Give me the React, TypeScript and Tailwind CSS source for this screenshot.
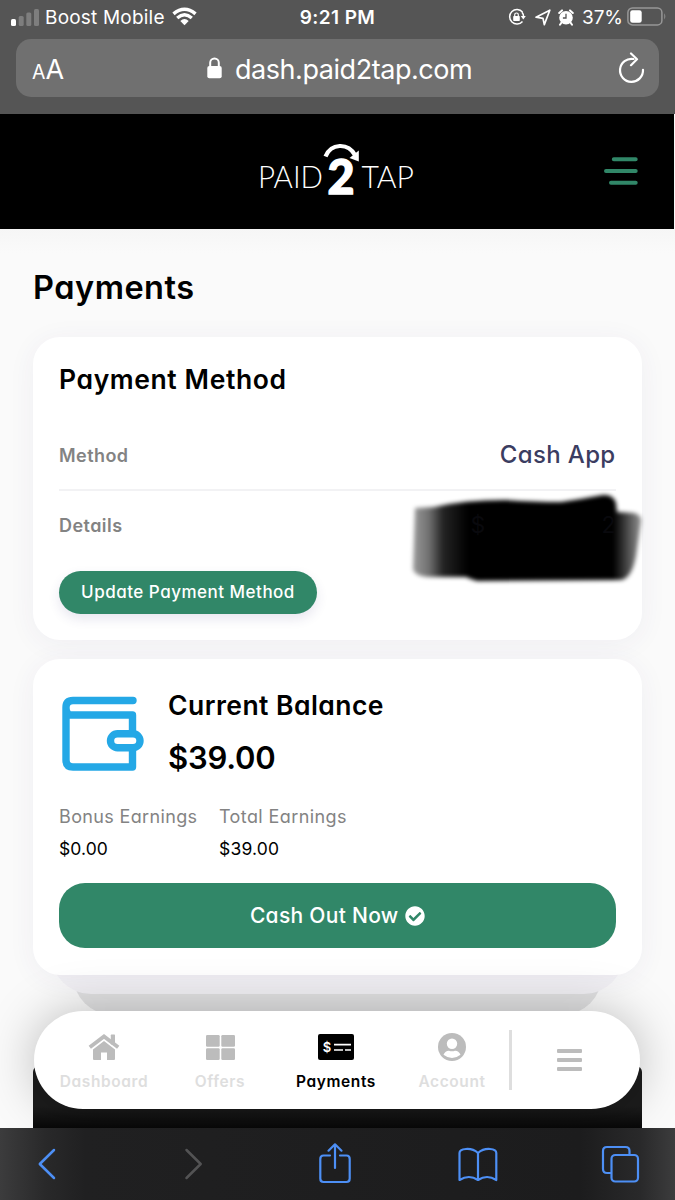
import React from "react";
import { FaCheckCircle } from "react-icons/fa";

const shell = "font-['Inter','Liberation_Sans',sans-serif]";
const brand = "[font-feature-settings:'cv11','ss03']";

function StatusBar() {
  return (
    <div className="flex h-[34px] items-center text-white">
      <div className="flex w-[250px] items-center pl-[11px]">
        <svg width="28" height="18" viewBox="0 0 28 18">
          <rect x="0" y="11" width="5" height="7" rx="1.5" fill="#fff" />
          <rect x="7.7" y="8" width="5" height="10" rx="1.5" fill="#7e7e7e" />
          <rect x="15.3" y="4.500" width="5" height="13.500" rx="1.500" fill="#7e7e7e" />
          <rect x="23" y="1" width="5" height="17" rx="1.500" fill="#7e7e7e" />
        </svg>
        <span className="ml-[6px] w-[120px] whitespace-nowrap pt-px text-[19px] leading-[34px] tracking-[0.2px]">Boost Mobile</span>
        <svg className="-mt-[2px] ml-[7px]" width="25" height="19" viewBox="0 0 25 19" fill="none" stroke="#fff">
          <path d="M1.500 6.800Q12.500-2.300 23.500 6.800" strokeWidth="3.600" />
          <path d="M5.200 11Q12.500 4.600 19.800 11" strokeWidth="3.300" />
          <path d="M8.300 13.900Q12.500 10 16.700 13.900L12.500 18.200Z" fill="#fff" stroke="none" />
        </svg>
      </div>
      <div className="w-[175px] whitespace-nowrap pt-px text-center text-[19px] font-semibold leading-[34px] tracking-[0.4px]">9:21 PM</div>
      <div className="flex flex-1 items-center pl-[83px]">
        <svg width="18" height="18" viewBox="0 0 18 18" fill="none" stroke="#fff" strokeWidth="1.500">
          <path d="M14.500 4A7.300 7.300 0 1 0 14.500 13.500" />
          <path d="M14 4.300A7.300 7.300 0 0 1 15.600 8.500" />
          <path d="M12.800 8h5l-2.500 3.400z" fill="#fff" stroke="none" />
          <rect x="5.200" y="8" width="6.600" height="5" rx=".8" fill="#fff" stroke="none" />
          <path d="M6.700 8.400V6.800a1.800 1.800 0 0 1 3.600 0v1.600" strokeWidth="1.200" />
        </svg>
        <svg className="ml-[9px]" width="16" height="17" viewBox="0 0 16 17" fill="none" stroke="#fff" strokeWidth="1.700" strokeLinejoin="round">
          <path d="M1 8.200L14.800 1.200L9.300 15.600L8 9.300Z" />
        </svg>
        <svg className="ml-[7px]" width="16" height="17" viewBox="0 0 16 17">
          <circle cx="8" cy="8.700" r="6.800" fill="#fff" />
          <path d="M1.200 4L4 1.400M14.800 4L12 1.400M3.500 13.500L2 15.700M12.500 13.500L14 15.700" stroke="#fff" strokeWidth="2" strokeLinecap="round" />
          <path d="M8 4.800V9H4.900" stroke="#555" strokeWidth="1.300" fill="none" />
        </svg>
        <span className="ml-[8px] w-[41px] whitespace-nowrap pt-px text-[19px] leading-[34px] tracking-[-0.1px]">37%</span>
        <svg className="-mt-px ml-[4px]" width="40" height="19" viewBox="0 0 40 19">
          <rect x=".9" y=".9" width="34" height="17" rx="4.500" fill="none" stroke="#979797" strokeWidth="1.500" />
          <rect x="3.200" y="3.200" width="11.500" height="12.500" rx="2.300" fill="#fff" />
          <path d="M37.300 6.300q2 3.100 0 6.200z" fill="#979797" />
        </svg>
      </div>
    </div>
  );
}

function AddressBar() {
  return (
    <div className="mx-4 mt-[5px] flex h-[58px] items-center rounded-[15px] bg-[#707070] text-white">
      <div className="flex w-[191px] items-baseline pl-[16px] pt-[5px] leading-[58px]">
        <span className="text-[19.500px]">A</span>
        <span className="text-[27px]">A</span>
      </div>
      <svg width="15" height="22" viewBox="0 0 15 22">
        <path d="M3.200 10V5.700a4.300 4.300 0 0 1 8.600 0V10" fill="none" stroke="#fff" strokeWidth="2" />
        <rect x=".3" y="9" width="14.400" height="12.300" rx="2" fill="#fff" />
      </svg>
      <span className="ml-[13px] w-[366px] whitespace-nowrap pt-[3px] text-[27px] leading-[58px] tracking-[-0.450px]">dash.paid2tap.com</span>
      <svg className="ml-[17px]" width="28" height="32" viewBox="0 0 28 32" fill="none" stroke="#fff" strokeWidth="2.200" strokeLinecap="round" strokeLinejoin="round">
        <path d="M15.500 7A11.500 11.500 0 1 0 25 17.800" />
        <path d="M13 1.500L19 7.200L13 13.200" />
      </svg>
    </div>
  );
}

function SiteHeader() {
  return (
    <header className="mr-px flex h-[115px] items-center bg-black">
      <svg className="-mt-[3px] ml-[255px] overflow-visible" width="165" height="70" viewBox="255 135 165 70">
        <g fill="#fff" fontFamily="Lato, sans-serif">
          <text x="258" y="188" fontSize="31" fontWeight="300" textLength="65" lengthAdjust="spacingAndGlyphs">PAID</text>
          <text x="327.500" y="194.200" fontSize="48" fontWeight="900" textLength="27" lengthAdjust="spacingAndGlyphs" stroke="#fff" strokeWidth="1.400">2</text>
          <text x="361.500" y="188" fontSize="31" fontWeight="300" textLength="52.500" lengthAdjust="spacingAndGlyphs">TAP</text>
        </g>
        <path d="M325.500 156.500C331 143 348 142.500 355 155" fill="none" stroke="#fff" strokeWidth="4.200" />
        <path d="M358.800 150.500V161.500L349.500 158Z" fill="#fff" />
      </svg>
      <svg className="-mt-px ml-[184px]" width="34" height="30" viewBox="0 0 34 30" stroke="#318768" strokeWidth="4" strokeLinecap="round">
        <path d="M9.800 3.300H31.700M2 15H31.700M7 26.700H31.700" />
      </svg>
    </header>
  );
}

function Redaction() {
  return (
    <svg className="absolute -right-[36px] -top-[4px]" width="246" height="104" viewBox="406 486 246 104">
      <defs>
        <filter id="soft" x="-10%" y="-20%" width="120%" height="140%"><feGaussianBlur stdDeviation="2" /></filter>
        <linearGradient id="smear" gradientUnits="userSpaceOnUse" x1="413" y1="0" x2="643" y2="0">
          <stop offset="0" stopColor="#000" stopOpacity=".4" />
          <stop offset=".07" stopColor="#000" stopOpacity=".56" />
          <stop offset=".13" stopColor="#000" stopOpacity=".86" />
          <stop offset=".24" stopColor="#000" />
          <stop offset=".87" stopColor="#000" />
          <stop offset=".91" stopColor="#000" stopOpacity=".82" />
          <stop offset="1" stopColor="#000" stopOpacity=".38" />
        </linearGradient>
      </defs>
      <path filter="url(#soft)" fill="url(#smear)" d="M415 507L434 506Q464 499 505 499Q535 501 561 501Q582 498 603 494Q613 493 616 502L617 511L634 512Q642 514 641 521L636 555Q632 577 621 579L477 580Q470 578 466 576L432 576Q415 576 413 568Z" />
    </svg>
  );
}

function PaymentMethodCard() {
  return (
    <section className="h-[303px] rounded-[27px] bg-white px-[26px] pt-[24px] shadow-[0_4px_28px_rgba(70,50,120,0.06)]">
      <h2 className="h-[36px] whitespace-nowrap text-[26.500px] font-semibold leading-[37px] tracking-[0.600px]">Payment Method</h2>
      <div className="mt-[23px] flex h-[71px] items-center justify-between border-b-2 border-[#f2f2f4]">
        <span className="pt-px text-[18px] font-semibold tracking-[0.450px] text-[#838383]">Method</span>
        <span className="text-[24px] font-medium tracking-[0.35px] text-[#3b3d61]">Cash App</span>
      </div>
      <div className="relative flex h-[68px] items-center">
        <span className="text-[18px] font-semibold tracking-[0.450px] text-[#838383]">Details</span>
        <Redaction />
        <div className="relative ml-auto flex w-[145px] justify-between text-[23px] text-[#09090d]">
          <span>$</span>
          <span>2</span>
        </div>
      </div>
      <button className="mt-[12px] flex h-[43px] w-[258px] items-center justify-center whitespace-nowrap rounded-full bg-[#318768] pt-px text-[17px] font-medium tracking-[0.500px] text-white shadow-[0_5px_12px_rgba(60,50,120,0.12)]">
        Update Payment Method
      </button>
    </section>
  );
}

function WalletIcon() {
  return (
    <svg width="83" height="76" viewBox="61 696 83 76" fill="none" stroke="#24a8e6" strokeWidth="7.400" strokeLinecap="round" strokeLinejoin="round">
      <path d="M133 700.500H73Q66 700.500 66 707.500V760Q66 767 73 767H132.500V715H70Q66 714 66 708" />
      <rect x="110.500" y="733.800" width="29.500" height="14" rx="7" fill="#fff" />
    </svg>
  );
}

function BalanceCard() {
  return (
    <section className="relative z-10 mt-[19px] h-[316px] rounded-[27px] bg-white px-[26px] pt-[28px] shadow-[0_4px_28px_rgba(70,50,120,0.06)]">
      <div className="flex h-[88px]">
        <div className="ml-[2px] mt-[9px]"><WalletIcon /></div>
        <div className="ml-[24px]">
          <h2 className="whitespace-nowrap text-[26.500px] font-semibold leading-[36px] tracking-[0.450px]">Current Balance</h2>
          <p className="mt-[17px] text-[31px] font-semibold leading-[36px] tracking-[-0.2px]">$39.00</p>
        </div>
      </div>
      <div className="mt-[28px] flex text-[18px] leading-[28px]">
        <div className="w-[160px]">
          <p className="whitespace-nowrap tracking-[0.35px] text-[#838383]">Bonus Earnings</p>
          <p className="mt-[4px] text-[17.500px] tracking-[0.1px]">$0.00</p>
        </div>
        <div>
          <p className="whitespace-nowrap tracking-[0.4px] text-[#838383]">Total Earnings</p>
          <p className="mt-[4px] text-[17.500px] tracking-[0.2px]">$39.00</p>
        </div>
      </div>
      <button className="mt-[20px] flex h-[65px] w-full items-center justify-center gap-[6px] whitespace-nowrap rounded-[26px] bg-[#318768] text-[21px] font-medium tracking-[0.3px] text-white">
        <span>Cash Out Now</span>
        <FaCheckCircle size={20} />
      </button>
    </section>
  );
}

function Tab({ label, active, children }: { label: string; active?: boolean; children: React.ReactNode }) {
  return (
    <div className={active ? "flex w-[116px] flex-col items-center text-black" : "flex w-[116px] flex-col items-center text-[#dedede]"}>
      <div className="flex h-[30px] items-center">{children}</div>
      <span className="mt-[8px] whitespace-nowrap text-[15.500px] font-semibold leading-[24px] tracking-[0.600px]">{label}</span>
    </div>
  );
}

function BottomNav() {
  return (
    <nav className="absolute left-[34px] top-[782px] z-20 flex h-[98px] w-[606px] rounded-[49px] bg-white pl-[12px] pt-[21px] shadow-[0_0_50px_rgba(0,0,0,0.26)]">
      <Tab label="Dashboard">
        <svg width="32" height="26" viewBox="0 0 32 26" fill="#bcbcbc">
          <rect x="22.800" y=".6" width="4.200" height="10" rx=".6" />
          <path d="M1.800 13.200L16 2.400L30.200 13.200" fill="none" stroke="#bcbcbc" strokeWidth="3.800" />
          <path d="M16 7L27 15.500V25a1 1 0 0 1-1 1H19V18.500H13V26H6a1 1 0 0 1-1-1V15.500Z" />
        </svg>
      </Tab>
      <Tab label="Offers">
        <svg width="29" height="25" viewBox="0 0 29 25" fill="#bcbcbc">
          <rect width="13.700" height="11.700" rx="1.200" /><rect x="15.300" width="13.700" height="11.700" rx="1.200" />
          <rect y="13.300" width="13.700" height="11.700" rx="1.200" /><rect x="15.300" y="13.300" width="13.700" height="11.700" rx="1.200" />
        </svg>
      </Tab>
      <Tab label="Payments" active>
        <svg width="36" height="26" viewBox="0 0 36 26">
          <rect width="36" height="26" rx="2" fill="#000" />
          <text x="9" y="17.500" textAnchor="middle" fontFamily="Inter, sans-serif" fontSize="13" fontWeight="600" fill="#fff">$</text>
          <path d="M16 10.700H33M16 16H25M27 16H33" stroke="#fff" strokeWidth="1.700" />
        </svg>
      </Tab>
      <Tab label="Account">
        <svg width="28" height="28" viewBox="0 0 28 28">
          <circle cx="14" cy="14" r="14" fill="#bcbcbc" />
          <circle cx="14" cy="10.700" r="5.200" fill="#fff" />
          <path d="M5.500 21.800Q7.500 17.500 11 17.700Q14 18.800 17 17.700Q20.500 17.500 22.500 21.800Q18.500 25 14 25T5.500 21.800Z" fill="#fff" />
        </svg>
      </Tab>
      <div className="-mt-[2px] -ml-px h-[60px] w-[3px] bg-[#dedede]" />
      <div className="ml-[45px] mt-[17px] flex w-[25px] flex-col gap-[5px]">
        <i className="h-[4px] rounded-[1px] bg-[#bcbcbc]" />
        <i className="h-[4px] rounded-[1px] bg-[#bcbcbc]" />
        <i className="h-[4px] rounded-[1px] bg-[#bcbcbc]" />
      </div>
    </nav>
  );
}

function BrowserToolbar() {
  return (
    <footer className="flex h-[72px] items-start bg-[linear-gradient(90deg,#3c3c3d_0,#29292a_45px,#202021_85px,#1c1c1d_580px,#29292a_640px,#3c3c3d_675px)] pt-[14px]">
      <svg className="ml-[36px]" width="22" height="44" viewBox="0 0 22 44" fill="none" stroke="#4d8ff5" strokeWidth="2.500" strokeLinecap="round" strokeLinejoin="round">
        <path d="M18 8L3.800 22L18 36" />
      </svg>
      <svg className="ml-[124px]" width="24" height="44" viewBox="182 0 24 44" fill="none" stroke="#535354" strokeWidth="2.500" strokeLinecap="round" strokeLinejoin="round">
        <path d="M186.500 8L200.700 22L186.500 36" />
      </svg>
      <svg className="ml-[112px]" width="34" height="44" viewBox="318 0 34 44" fill="none" stroke="#4d8ff5" strokeWidth="2.200" strokeLinecap="round" strokeLinejoin="round">
        <path d="M330 13.500H323.500Q320.300 13.500 320.300 17V36.500Q320.300 40 323.500 40H346.500Q349.700 40 349.700 36.500V17Q349.700 13.500 346.500 13.500H340" />
        <path d="M335 26V3M328.500 8.700L335 2.300L341.500 8.700" />
      </svg>
      <svg className="ml-[105px]" width="42" height="44" viewBox="457 0 42 44" fill="none" stroke="#4d8ff5" strokeWidth="2.200" strokeLinejoin="round">
        <path d="M478 11Q473 6.500 466 7Q459.500 7.500 459.500 11V38Q469 32 478 38Q487 32 496.300 38V11Q496.300 7.500 490 7Q483 6.500 478 11ZM478 11V38" />
      </svg>
      <svg className="ml-[102px]" width="40" height="44" viewBox="601 0 40 44" fill="none" stroke="#4d8ff5" strokeWidth="2.200">
        <path d="M611 31H607Q603 31 603 27V9Q603 5 607 5H625.500Q629.500 5 629.500 9V13" />
        <rect x="611.500" y="13" width="26.500" height="26.500" rx="3.800" />
      </svg>
    </footer>
  );
}

export default function App() {
  return (
    <div className={`${shell} h-[1200px] w-[675px] overflow-hidden bg-[#fafafa] text-black`}>
      <div className="h-[114px] bg-[#555555]">
        <StatusBar />
        <AddressBar />
      </div>
      <SiteHeader />
      <main className={`${brand} relative h-[899px] overflow-hidden bg-[linear-gradient(180deg,#f6f6f6_0,#fafafa_24px)] px-[33px] pt-[36px]`}>
        <h1 className="mb-[28px] h-[44px] whitespace-nowrap text-[32.500px] font-semibold leading-[45px] tracking-[0.500px]">Payments</h1>
        <div className="w-[608.500px]">
          <PaymentMethodCard />
          <BalanceCard />
          <div className="relative z-[5] mx-[18px] -mt-[41px] h-[60px] rounded-b-[40px] bg-[#f4f3f6]" />
          <div className="mx-[40px] -mt-[40px] h-[61px] rounded-b-[40px] bg-[#e2e2e3]" />
          <div className="mt-[51px] h-[100px] rounded-t-[6px] bg-[linear-gradient(180deg,#1c1c1c_40px,#080808_62px)]" />
        </div>
        <BottomNav />
      </main>
      <BrowserToolbar />
    </div>
  );
}
